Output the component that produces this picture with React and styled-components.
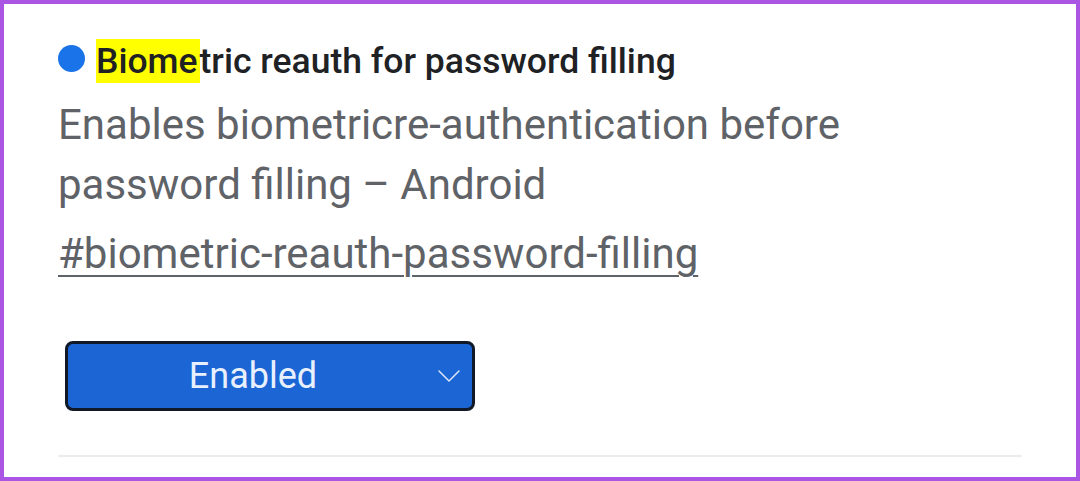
import React from 'react';
import styled, { createGlobalStyle } from 'styled-components';

const GlobalStyle = createGlobalStyle`
  html, body {
    margin: 0;
    padding: 0;
    background: #ffffff;
  }
  body {
    font-family: Roboto, "Noto Sans", sans-serif;
  }
`;

const Frame = styled.div`
  box-sizing: border-box;
  width: 1080px;
  height: 481px;
  border: 4px solid #aa55e4;
  background: #ffffff;
  padding: 35px 54px 0 54px;
  display: flex;
  flex-direction: column;
  overflow: hidden;
`;

const TitleRow = styled.div`
  display: flex;
  align-items: center;
  gap: 11px;
  height: 44px;
`;

const Dot = styled.span`
  width: 27px;
  height: 27px;
  border-radius: 50%;
  background: #1a73e8;
  flex-shrink: 0;
  margin-bottom: 6px;
`;

const Title = styled.h1`
  margin: 0;
  font-size: 35.5px;
  line-height: 44px;
  font-weight: 500;
  color: #202124;
  white-space: nowrap;
`;

const Highlight = styled.mark`
  background: #ffff00;
  color: inherit;
  padding: 1px 2px 1px 0;
`;

const Description = styled.p`
  margin: 12px 0 0;
  font-size: 42px;
  line-height: 60px;
  color: #5f6368;
  max-width: 840px;
`;

const FlagLink = styled.a`
  display: block;
  margin-top: 9px;
  font-size: 42px;
  line-height: 60px;
  color: #5f6368;
  text-decoration: underline;
  text-decoration-thickness: 2px;
  text-underline-offset: 7px;
`;

const Select = styled.button`
  box-sizing: border-box;
  margin: 57px 0 0 7px;
  width: 410px;
  height: 70px;
  border: 3px solid #111827;
  border-radius: 8px;
  background: #1b66d4;
  color: #e8f0fe;
  font-family: Roboto, "Noto Sans", sans-serif;
  font-size: 36px;
  display: flex;
  align-items: center;
  justify-content: center;
  position: relative;
  padding: 0 34px 0 0;
`;

const Chevron = styled.svg`
  position: absolute;
  right: 11px;
  top: 50%;
  transform: translateY(-50%);
`;

const Divider = styled.hr`
  margin: 44px 0 0;
  width: 964px;
  border: none;
  border-top: 2px solid #ececec;
`;

export default function App() {
  return (
    <>
      <GlobalStyle />
      <Frame>
        <TitleRow>
          <Dot />
          <Title>
            <Highlight>Biome</Highlight>tric reauth for password filling
          </Title>
        </TitleRow>
        <Description>
          Enables biometricre-authentication before password filling – Android
        </Description>
        <FlagLink href="#biometric-reauth-password-filling">
          #biometric-reauth-password-filling
        </FlagLink>
        <div>
          <Select>
            Enabled
            <Chevron width="24" height="14" viewBox="0 0 24 14" fill="none">
              <polyline
                points="2,2 12,12 22,2"
                stroke="#dbe6fb"
                strokeWidth="1.5"
                strokeLinecap="round"
                strokeLinejoin="round"
              />
            </Chevron>
          </Select>
        </div>
        <Divider />
      </Frame>
    </>
  );
}
